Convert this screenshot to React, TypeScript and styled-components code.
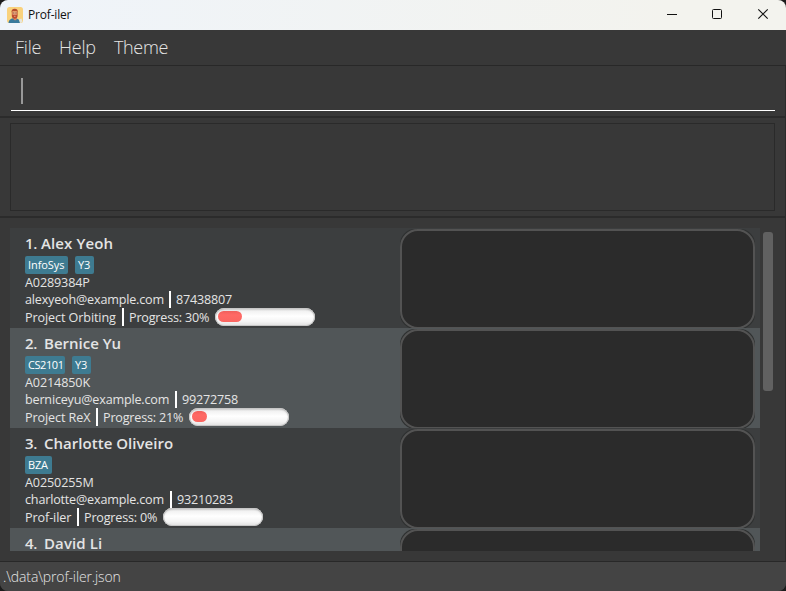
import React from "react";
import styled, { createGlobalStyle } from "styled-components";

const Global = createGlobalStyle`
  * { box-sizing: border-box; }
  body { margin: 0; background: #1c1c1c; overflow: hidden; }
`;

const Window = styled.div`
  width: 786px;
  height: 591px;
  display: flex;
  flex-direction: column;
  overflow: hidden;
  border-radius: 8px;
  background: #383838;
  color: #e4e4e4;
  font-family: "Open Sans", "Noto Sans", sans-serif;
  white-space: pre;
`;

const TitleBar = styled.header`
  height: 30px;
  flex: none;
  display: flex;
  align-items: center;
  padding-left: 7px;
  background: linear-gradient(90deg, #eff4fa, #f3f3ee 85%);
  color: #111;
`;

const Title = styled.span`
  flex: 1;
  margin-left: 5px;
  font-size: 12px;
  line-height: 28px;
  letter-spacing: -0.18px;
`;

const Controls = styled.div`
  display: flex;
  svg { display: block; }
`;

const MenuBar = styled.nav`
  height: 36px;
  flex: none;
  display: flex;
  padding-left: 15px;
  border-bottom: 1px solid #282828;
  font-size: 18px;
  font-weight: 300;
  line-height: 35px;
`;

const MenuItem = styled.span<{ $w: number; $ls: number }>`
  width: ${(p) => p.$w}px;
  letter-spacing: ${(p) => p.$ls}px;
`;

const CommandPane = styled.div`
  height: 52px;
  flex: none;
  padding: 5px 10px 0 11px;
  border-bottom: 2px solid #2b2b2b;
  border-right: 1px solid #2b2b2b;
`;

const CommandField = styled.div`
  height: 40px;
  padding: 7px 0 0 10px;
  border-bottom: 1px solid #fff;
`;

const Caret = styled.div`
  width: 2px;
  height: 26px;
  background: #999;
`;

const ResultPane = styled.div`
  height: 100px;
  flex: none;
  padding: 5px 10px;
  border-bottom: 2px solid #2b2b2b;
  border-right: 1px solid #2b2b2b;
`;

const ResultBox = styled.div`
  height: 88px;
  border: 1px solid #2a2a2a;
`;

const ListPane = styled.main`
  height: 343px;
  flex: none;
  display: flex;
  padding: 10px 12px 10px 10px;
  border-right: 1px solid #2b2b2b;
`;

const List = styled.div`
  width: 750px;
  height: 323px;
  overflow: hidden;
`;

const ScrollTrack = styled.div`
  padding: 4px 0 0 3px;
`;

const ScrollThumb = styled.div`
  width: 10px;
  height: 159px;
  border-radius: 3px;
  background: #616161;
`;

const Card = styled.article<{ $alt: boolean }>`
  height: 100px;
  display: flex;
  overflow: hidden;
  background: ${(p) => (p.$alt ? "#515658" : "#3c3e3f")};
`;

const Info = styled.div`
  width: 390px;
  padding: 5px 0 0 15px;
  font-size: 12.6px;
`;

const Name = styled.div<{ $ls: number }>`
  height: 23px;
  display: flex;
  font-size: 15px;
  font-weight: 600;
  line-height: 21px;
  letter-spacing: ${(p) => p.$ls}px;
`;

const Index = styled.span<{ $w: number }>`
  width: ${(p) => p.$w}px;
  letter-spacing: -0.3px;
`;

const Tags = styled.div`
  height: 18px;
  display: flex;
  gap: 7px;
`;

const Tag = styled.span<{ $w: number; $ls: number }>`
  width: ${(p) => p.$w}px;
  height: 18px;
  padding-left: 3px;
  border-radius: 2px;
  background: #3e7b91;
  color: #fff;
  font-size: 11px;
  line-height: 18px;
  letter-spacing: ${(p) => p.$ls}px;
`;

const Line = styled.div<{ $h: number }>`
  height: ${(p) => p.$h}px;
  display: flex;
  line-height: ${(p) => (p.$h > 17 ? 19 : 17)}px;
`;

const Label = styled.span<{ $w: number; $ls: number }>`
  width: ${(p) => p.$w}px;
  flex: none;
  letter-spacing: ${(p) => p.$ls}px;
`;

const Divider = styled.span`
  width: 2px;
  margin-right: 5px;
  background: #fff;
`;

const Meter = styled.div`
  width: 100px;
  height: 18px;
  padding: 3px;
  border-radius: 9px;
  background: linear-gradient(#d5d5d5 0, #f2f2f2 18%, #fff 45%, #f4f4f4 75%, #dedede 100%);
  box-shadow: inset 0 0 0 1px #c6c6c6, inset 0 1px 2px #aaa;
`;

const MeterFill = styled.div<{ $w: number }>`
  width: ${(p) => p.$w}px;
  height: 11px;
  border-radius: 5.5px;
  background: linear-gradient(#f0605c, #ff6965 35%, #fa6661);
`;

const Detail = styled.div`
  width: 355px;
  height: 100px;
  flex: none;
  margin-top: 1px;
  border-radius: 15px;
  background: #2f3131;
`;

const DetailFrame = styled.div`
  height: 100%;
  border: 2px solid #535353;
  border-radius: 18px;
  background: #2b2b2b;
`;

const StatusBar = styled.footer`
  flex: 1;
  padding-left: 3px;
  border-top: 1px solid #282828;
  background: #444;
  font-size: 14px;
  font-weight: 300;
  line-height: 30px;
  letter-spacing: -0.13px;
`;

type Fit = [text: string, width: number, spacing: number];

interface Person {
  index: Fit;
  name: string;
  nameLs: number;
  tags: Fit[];
  id: Fit;
  email: Fit;
  phone: Fit;
  project: Fit;
  progress: Fit;
  fill: number;
}

const people: Person[] = [
  {
    index: ["1.", 16, 0], name: "Alex Yeoh", nameLs: 0.12,
    tags: [["InfoSys", 43, -0.08], ["Y3", 19, -0.2]],
    id: ["A0289384P", 80, -0.14],
    email: ["alexyeoh@example.com", 144, -0.19],
    phone: ["87438807", 80, -0.2],
    project: ["Project Orbiting", 97, -0.1],
    progress: ["Progress: 30%", 86, -0.2],
    fill: 24,
  },
  {
    index: ["2.", 19, 0], name: "Bernice Yu", nameLs: 0,
    tags: [["CS2101", 40, -0.42], ["Y3", 19, -0.2]],
    id: ["A0214850K", 80, -0.12],
    email: ["berniceyu@example.com", 150, -0.19],
    phone: ["99272758", 80, -0.2],
    project: ["Project ReX", 71, -0.1],
    progress: ["Progress: 21%", 86, -0.2],
    fill: 15,
  },
  {
    index: ["3.", 19, 0], name: "Charlotte Oliveiro", nameLs: 0.03,
    tags: [["BZA", 27, -0.2]],
    id: ["A0250255M", 80, -0.12],
    email: ["charlotte@example.com", 145, -0.19],
    phone: ["93210283", 80, -0.2],
    project: ["Prof-iler", 52, -0.1],
    progress: ["Progress: 0%", 79, -0.2],
    fill: 0,
  },
];

const FitLabel = ({ fit }: { fit: Fit }) => (
  <Label $w={fit[1]} $ls={fit[2]}>{fit[0]}</Label>
);

const PersonCard = ({ person, alt }: { person: Person; alt: boolean }) => (
  <Card $alt={alt}>
    <Info>
      <Name $ls={person.nameLs}>
        <Index $w={person.index[1]}>{person.index[0]}</Index>
        <span>{person.name}</span>
      </Name>
      <Tags>
        {person.tags.map(([text, w, ls]) => (
          <Tag key={text} $w={w} $ls={ls}>{text}</Tag>
        ))}
      </Tags>
      <Line $h={17}><FitLabel fit={person.id} /></Line>
      <Line $h={17}>
        <FitLabel fit={person.email} />
        <Divider />
        <FitLabel fit={person.phone} />
      </Line>
      <Line $h={18}>
        <FitLabel fit={person.project} />
        <Divider />
        <FitLabel fit={person.progress} />
        <Meter>{person.fill > 0 && <MeterFill $w={person.fill} />}</Meter>
      </Line>
    </Info>
    <Detail><DetailFrame /></Detail>
  </Card>
);

const AppIcon = () => (
  <svg width="16" height="16" viewBox="0 0 16 16">
    <rect width="16" height="16" rx="2.5" fill="#f9d27d" />
    <path d="M1.5 16c.2-3 2-4 4.500-4.700l3.800.3c2.200.7 3 2 3.200 4.400z" fill="#397a9c" />
    <path d="M5.800 9h4v3.200L8 13.500l-2-1.800z" fill="#db875f" />
    <path d="M4.800 4.500h5.800v4.200c0 2-1.300 3-2.900 3s-2.900-1-2.900-3z" fill="#bd4c30" />
    <path d="M5.500 4.600h4.300v3.100H5.500z" fill="#eda57b" />
    <path d="M4.700 5.500c-.7-2.500.8-3.800 3-3.800 2.400 0 3.500 1.300 2.900 3.500l-1-1.300H5.600z" fill="#b54c2e" />
    <path d="M6 6h1.300M8.300 6h1.300" stroke="#63473c" strokeWidth=".7" />
    <path d="M7 9.300h1.600" stroke="#f3d1b7" strokeWidth=".6" />
    <path d="M12 12.500l2.500-1 1 3.500-2.500 1z" fill="#e6e6dc" />
  </svg>
);

export default function App() {
  return (
    <>
      <Global />
      <Window>
        <TitleBar>
          <AppIcon />
          <Title>Prof-iler</Title>
          <Controls>
            <svg width="138" height="30" fill="none" stroke="#111" strokeWidth="1">
              <path d="M19 14.500h10" />
              <rect x="64.500" y="9.500" width="9" height="9" rx="1" />
              <path d="M110.300 9.300l9.400 9.400M119.700 9.300l-9.400 9.400" strokeWidth="1.150" />
            </svg>
          </Controls>
        </TitleBar>
        <MenuBar>
          <MenuItem $w={44} $ls={-0.2}>File</MenuItem>
          <MenuItem $w={55} $ls={-0.2}>Help</MenuItem>
          <MenuItem $w={60} $ls={-0.35}>Theme</MenuItem>
        </MenuBar>
        <CommandPane>
          <CommandField><Caret /></CommandField>
        </CommandPane>
        <ResultPane><ResultBox /></ResultPane>
        <ListPane>
          <List>
            {people.map((p, i) => (
              <PersonCard key={p.name} person={p} alt={i % 2 === 1} />
            ))}
            <Card $alt>
              <Info>
                <Name $ls={0.1}>
                  <Index $w={19}>4.</Index>
                  <span>David Li</span>
                </Name>
              </Info>
              <Detail><DetailFrame /></Detail>
            </Card>
          </List>
          <ScrollTrack><ScrollThumb /></ScrollTrack>
        </ListPane>
        <StatusBar>.\data\prof-iler.json</StatusBar>
      </Window>
    </>
  );
}
